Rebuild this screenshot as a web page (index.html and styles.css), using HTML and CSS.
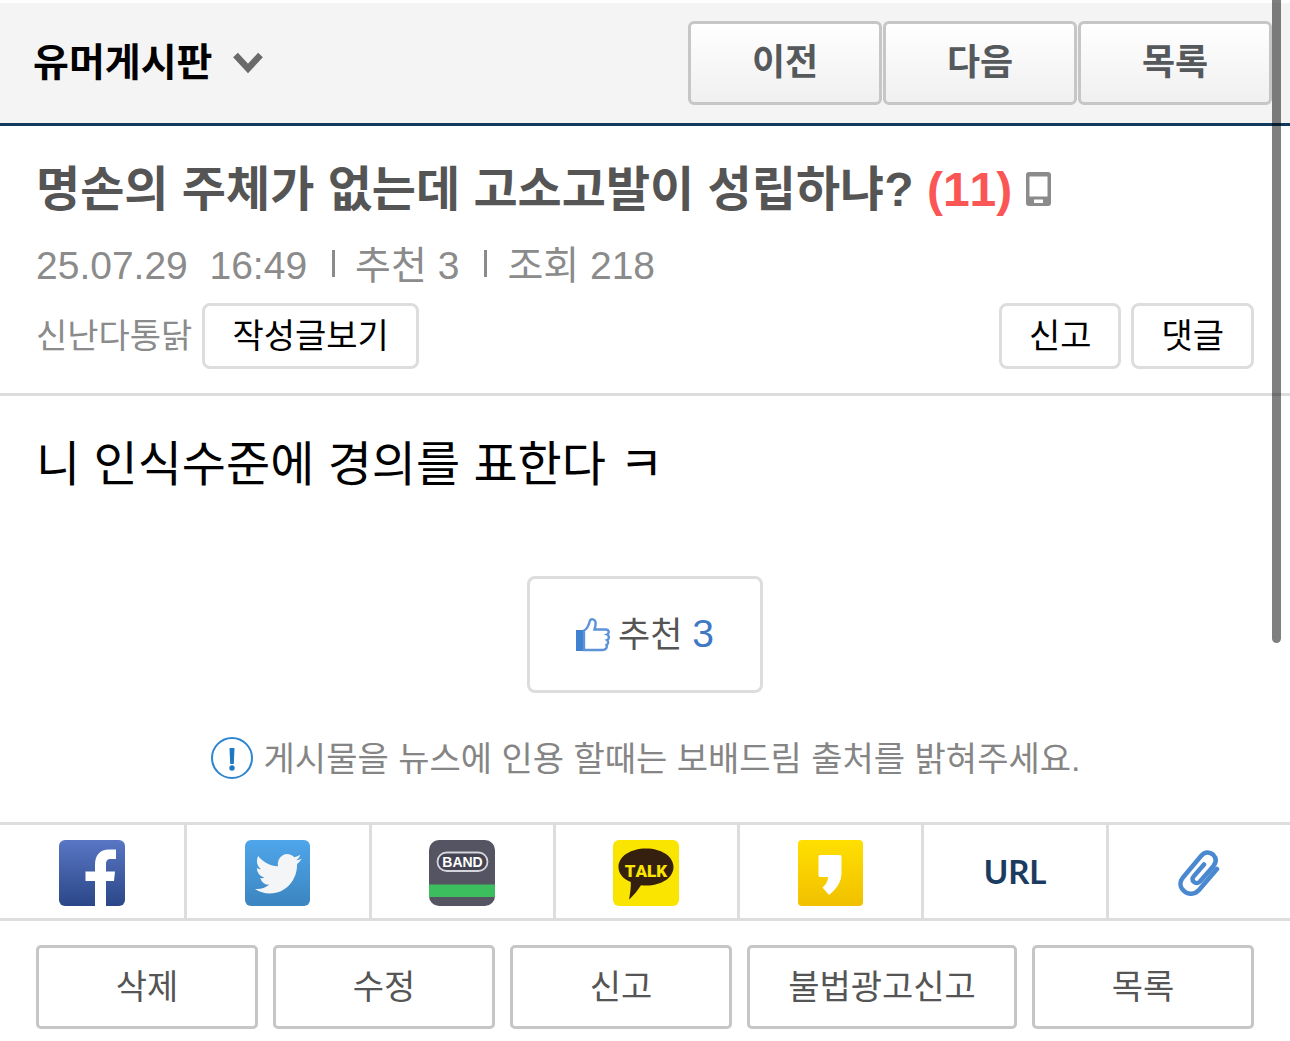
FILE: index.html
```html
<!DOCTYPE html>
<html lang="ko">
<head>
  <meta charset="UTF-8">
  <meta name="viewport" content="width=device-width, initial-scale=1.0">
  <title>유머게시판</title>
  <link rel="stylesheet" href="styles.css">
</head>
<body>

<header class="top">
  <button type="button" class="board">
    유머게시판
    <svg width="30" height="22" viewBox="0 0 30 22"><path d="M2.500 3 15 16.500 27.500 3" fill="none" stroke="#6a6a6a" stroke-width="6.500"/></svg>
  </button>
  <nav class="top-nav">
    <button type="button">이전</button>
    <button type="button">다음</button>
    <button type="button">목록</button>
  </nav>
</header>

<main>
  <section class="post-head">
    <h1>명손의 주체가 없는데 고소고발이 성립하냐? <span class="count">(11)</span>
      <svg class="phone" width="25" height="34" viewBox="0 0 25 34"><path fill="#8b8b8b" fill-rule="evenodd" d="M3 0h19a3 3 0 0 1 3 3v28a3 3 0 0 1-3 3H3a3 3 0 0 1-3-3V3a3 3 0 0 1 3-3zM3.500 4.500v20h18v-20zM8 27.500v3.500h9v-3.500z"/></svg>
    </h1>
    <div class="meta">
      <span>25.07.29&nbsp; 16:49</span>
      <span class="bar"></span>
      <span>추천 3</span>
      <span class="bar"></span>
      <span>조회 218</span>
    </div>
    <div class="writer">
      <span class="name">신난다통닭</span>
      <button type="button" class="btn-s">작성글보기</button>
      <div class="right">
        <button type="button" class="btn-s">신고</button>
        <button type="button" class="btn-s">댓글</button>
      </div>
    </div>
  </section>

  <article class="content">
    <p>니 인식수준에 경의를 표한다 ㅋ</p>
    <button type="button" class="recommend">
      <svg width="34" height="34" viewBox="0 0 34 34">
        <path d="M0 12h8v21H0z" fill="#3f80d0"/>
        <path d="M8 12.500C12 11 13 6 14 2.500c1-2 5-1.500 5.500 1.500.5 3-.5 5.500-1 7.500h11c4 0 4 4 1.500 5 2.500 1 2.500 4.500 0 5.500 2 1.500 1 4.500-.5 5 1 3-1 5-4 5H8z" fill="#fff" stroke="#5b92d8" stroke-width="2.400"/>
      </svg>
      <span>추천 <em>3</em></span>
    </button>
    <div class="notice">
      <svg width="44" height="44" viewBox="0 0 44 44">
        <circle cx="22" cy="21" r="20" fill="none" stroke="#2f86cf" stroke-width="2"/>
        <path d="M19.500 11h5l-.7 16h-3.600z" fill="#1f78c4"/>
        <circle cx="22" cy="31" r="2.700" fill="#1f78c4"/>
      </svg>
      <span>게시물을 뉴스에 인용 할때는 보배드림 출처를 밝혀주세요.</span>
    </div>
  </article>

  <nav class="share">
    <a href="#" aria-label="facebook">
      <svg width="66" height="66" viewBox="0 0 66 66">
        <defs><linearGradient id="fb" x2="0" y2="1"><stop offset="0" stop-color="#5876c4"/><stop offset="1" stop-color="#2b4788"/></linearGradient></defs>
        <rect width="66" height="66" rx="6" fill="url(#fb)"/>
        <path fill="#fff" d="M36 66V41H26.500v-9.500H36V25c0-10 5-15.500 14-15.500h7V19h-5c-4 0-5 2-5 5.500v7h9L55 41h-8v25z"/>
      </svg>
    </a>
    <a href="#" aria-label="twitter">
      <svg width="66" height="66" viewBox="0 0 66 66">
        <defs><linearGradient id="tw" x2="0" y2="1"><stop offset="0" stop-color="#4fa6ea"/><stop offset="1" stop-color="#3b85c0"/></linearGradient></defs>
        <rect width="65" height="66" rx="6" fill="url(#tw)"/>
        <path fill="#f4f5f7" transform="translate(10 9.500) scale(1.950 2.020)" d="M23.953 4.570a10 10 0 0 1-2.825.775 4.958 4.958 0 0 0 2.163-2.723c-.951.555-2.005.959-3.127 1.184a4.920 4.920 0 0 0-8.384 4.482C7.690 8.095 4.067 6.130 1.640 3.162a4.822 4.822 0 0 0-.666 2.475c0 1.710.870 3.213 2.188 4.096a4.904 4.904 0 0 1-2.228-.616v.060a4.923 4.923 0 0 0 3.946 4.827 4.996 4.996 0 0 1-2.212.085 4.936 4.936 0 0 0 4.604 3.417 9.867 9.867 0 0 1-6.102 2.105c-.390 0-.779-.023-1.170-.067a13.995 13.995 0 0 0 7.557 2.209c9.053 0 13.998-7.496 13.998-13.985 0-.210 0-.420-.015-.630A9.935 9.935 0 0 0 24 4.590z"/>
      </svg>
    </a>
    <a href="#" aria-label="band">
      <svg width="66" height="66" viewBox="0 0 66 66">
        <rect width="66" height="66" rx="10" fill="#555462"/>
        <path d="M0 44.500h66V57H0z" fill="#3cbe5e"/>
        <rect x="8.500" y="12.500" width="50" height="18.500" rx="9.250" fill="#454452" stroke="#d4d4dc" stroke-width="1.800"/>
        <text x="33.500" y="27" class="band-text">BAND</text>
      </svg>
    </a>
    <a href="#" aria-label="kakaotalk">
      <svg width="66" height="66" viewBox="0 0 66 66">
        <rect width="66" height="66" rx="6" fill="#fae500"/>
        <path fill="#35200f" d="M33 8.500c15.500 0 27.500 8 27.500 18.500S49 45.500 33 45.500q-3 0-5-.3C25 50 20 56 16 59.500c1-5 2-11 1.800-17.500C10 39 5.500 33.500 5.500 27 5.500 16.500 17.500 8.500 33 8.500z"/>
        <text x="33" y="37" class="talk-text">TALK</text>
      </svg>
    </a>
    <a href="#" aria-label="kakaostory">
      <svg width="66" height="66" viewBox="0 0 66 66">
        <defs><linearGradient id="ks" x2="0" y2="1"><stop offset="0" stop-color="#ffdf00"/><stop offset="1" stop-color="#f1c000"/></linearGradient></defs>
        <rect width="65" height="66" rx="4" fill="url(#ks)"/>
        <path fill="#fff" d="M22 15h20q1.500 0 1.500 1.500V33c0 9-5 16-12.500 22l-6.500-7.500c3.500-3 5.500-6.500 5.500-10.500h-8q-1.500 0-1.500-1.500v-19Q20.500 15 22 15z"/>
      </svg>
    </a>
    <a href="#" class="url">URL</a>
    <a href="#" aria-label="link">
      <svg width="42" height="46" viewBox="0 0 42 46"><path d="M39 19 21 40C17 44.500 10 45 6 41 1.500 37 1.500 31.500 5 27.500L23 6c3.500-4.500 8.500-4.500 12-1.500 3.500 3.500 3.500 7.500.5 11.500L22 31.500c-2 2-4.500 2-6 .5-2-1.500-2-4 0-6L26 14.500" fill="none" stroke="#4a88d0" stroke-width="4.500" stroke-linecap="round"/></svg>
    </a>
  </nav>

  <div class="actions">
    <button type="button">삭제</button>
    <button type="button">수정</button>
    <button type="button">신고</button>
    <button type="button">불법광고신고</button>
    <button type="button">목록</button>
  </div>
</main>

<div class="scroll-thumb"></div>

</body>
</html>
```

FILE: styles.css
```css
* { box-sizing: border-box; }

body {
  margin: 0;
  padding-top: 3px;
  background: #fff;
  color: #000;
  font-family: "Liberation Sans", "Noto Sans CJK KR", sans-serif;
  font-kerning: none;
}

button {
  margin: 0;
  font-family: inherit;
  cursor: pointer;
}

a { text-decoration: none; }
svg { flex-shrink: 0; }

/* header */
.top {
  display: flex;
  justify-content: space-between;
  align-items: center;
  padding: 18px 18px 18px 33px;
  background: #f4f4f4;
  border-bottom: 3px solid #113a5c;
}

.board {
  display: flex;
  align-items: center;
  gap: 21px;
  padding: 0;
  border: 0;
  background: none;
  color: #000;
  font-size: 39px;
  font-weight: bold;
  line-height: 60px;
}

.top-nav {
  display: flex;
  gap: 1px;
}

.top-nav button {
  width: 194px;
  padding: 12px 0;
  border: 3px solid #c6c6c6;
  border-radius: 6px;
  background: linear-gradient(#fff, #f0f0f0);
  color: #55595c;
  font-size: 36px;
  font-weight: bold;
  line-height: 54px;
}

/* title */
.post-head {
  padding: 34px 36px 24px;
  border-bottom: 3px solid #ddd;
}

.post-head h1 {
  margin: 0;
  color: #555;
  font-size: 48px;
  line-height: 60px;
}

.count { color: #fb5656; }

.meta {
  display: flex;
  align-items: center;
  gap: 20px;
  margin-top: 22px;
  color: #8b8b8b;
  font-size: 39px;
  line-height: 48px;
}

.bar {
  width: 3px;
  height: 27px;
  margin: 0 0 6px 5px;
  background: #8b8b8b;
}

.writer {
  display: flex;
  align-items: center;
  gap: 10px;
  margin-top: 13px;
  font-size: 34px;
  line-height: 48px;
}

.name { color: #8b8b8b; }

.right {
  display: flex;
  gap: 10px;
  margin-left: auto;
}

.btn-s {
  padding: 6px 27px;
  border: 3px solid #ddd;
  border-radius: 8px;
  background: #fff;
  color: #000;
  font-size: 34px;
  line-height: 48px;
}

/* content */
.content {
  display: flex;
  flex-direction: column;
  padding: 39px 36px;
}

.content p {
  margin: 0 0 81px;
  font-size: 48px;
  line-height: 60px;
}

.recommend {
  display: flex;
  align-items: center;
  align-self: center;
  gap: 8px;
  padding: 31px 46px;
  border: 3px solid #ddd;
  border-radius: 8px;
  background: #fff;
  color: #555;
  font-size: 35px;
  line-height: 48px;
}

.recommend em {
  color: #3f78c3;
  font-size: 39px;
  font-style: normal;
}

.notice {
  display: flex;
  justify-content: center;
  align-items: center;
  gap: 10px;
  margin-top: 42px;
  color: #858585;
  font-size: 34px;
  line-height: 48px;
}

/* share */
.share {
  display: grid;
  grid-template-columns: repeat(7, 1fr);
  border-top: 3px solid #ddd;
  border-bottom: 3px solid #ddd;
}

.share a {
  display: flex;
  justify-content: center;
  align-items: center;
  height: 93px;
  padding-top: 3px;
}

.share a + a { border-left: 3px solid #ddd; }

.share .url {
  padding-bottom: 4px;
  color: #1b3b60;
  font-family: Lato, sans-serif;
  font-size: 33px;
  font-weight: bold;
}

.band-text,
.talk-text {
  font-weight: bold;
  text-anchor: middle;
}

.band-text {
  fill: #fff;
  font-size: 14px;
}

.talk-text {
  fill: #fae500;
  font-size: 17px;
  font-family: Roboto, sans-serif;
  font-weight: 900;
}

/* bottom buttons */
.actions {
  display: grid;
  grid-template-columns: 1fr 1fr 1fr 1.216fr 1fr;
  gap: 15px;
  padding: 24px 36px 12px;
}

.actions button {
  padding: 12px 0;
  border: 3px solid #c6c6c6;
  border-radius: 5px;
  background: #fff;
  color: #555;
  font-size: 34px;
  line-height: 54px;
}

.scroll-thumb {
  position: absolute;
  top: 0;
  right: 9px;
  width: 9px;
  height: 643px;
  border-radius: 0 0 5px 5px;
  background: rgba(0, 0, 0, 0.5);
}
```
